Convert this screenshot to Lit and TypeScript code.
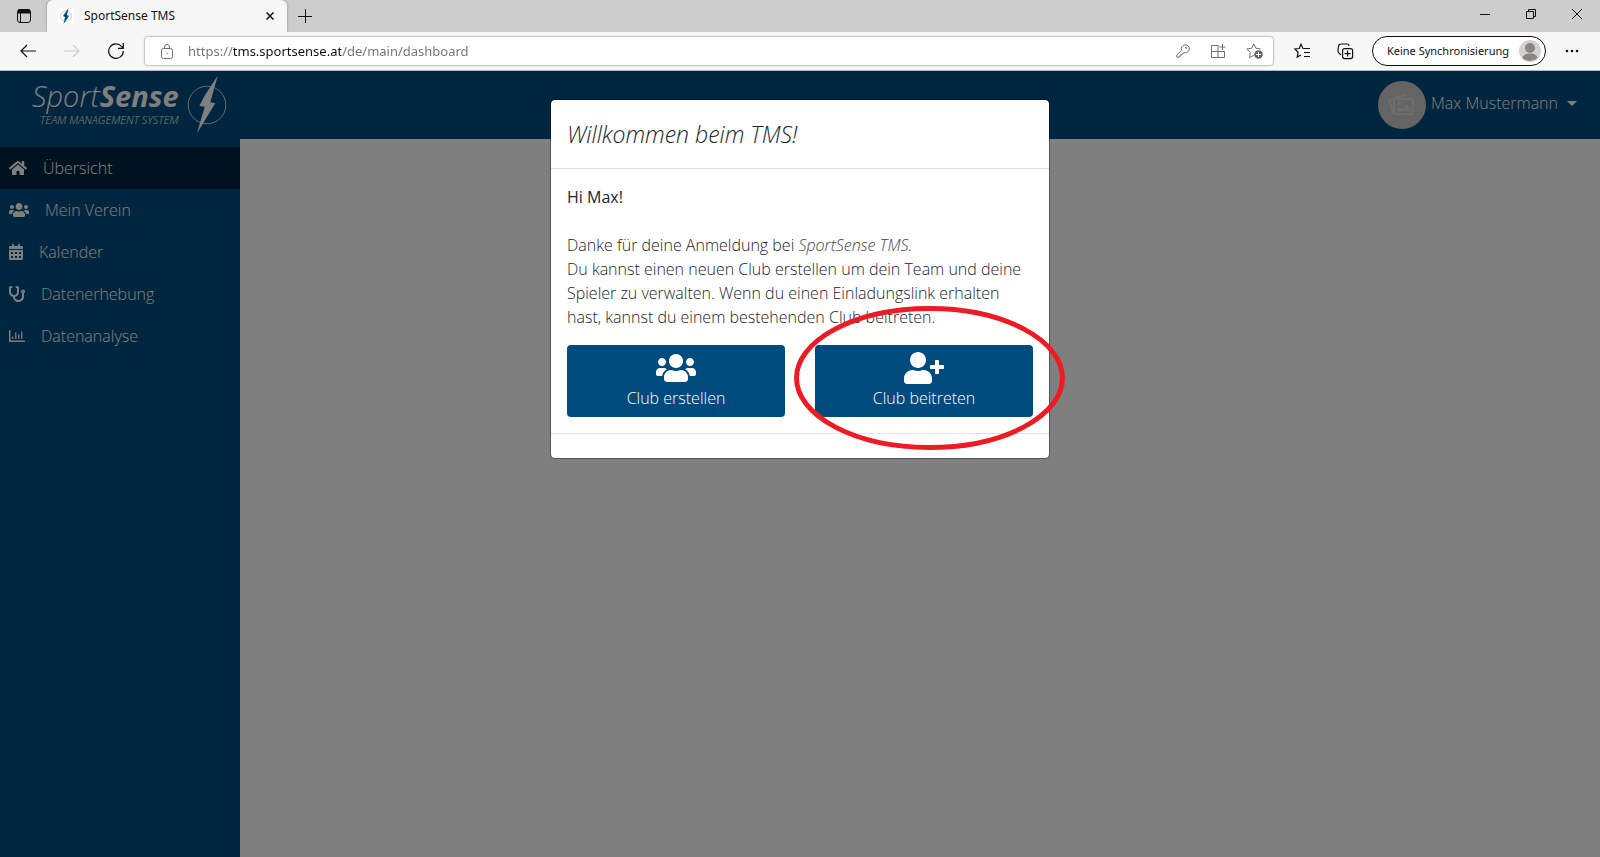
import { LitElement, html, css, svg } from "lit";
import { customElement, property } from "lit/decorators.js";

const icons: Record<string, { box: string; art: unknown }> = {
  home: {
    box: "0 0 576 512",
    art: svg`<path d="M280.37 148.26L96 300.11V464a16 16 0 0 0 16 16l112.06-.29a16 16 0 0 0 15.92-16V368a16 16 0 0 1 16-16h64a16 16 0 0 1 16 16v95.64a16 16 0 0 0 16 16.05L464 480a16 16 0 0 0 16-16V300L295.67 148.26a12.19 12.19 0 0 0-15.3 0zM571.6 251.47L488 182.56V44.05a12 12 0 0 0-12-12h-56a12 12 0 0 0-12 12v72.61L318.47 43a48 48 0 0 0-61 0L4.34 251.47a12 12 0 0 0-1.6 16.9l25.5 31A12 12 0 0 0 45.15 301l235.22-193.74a12.19 12.19 0 0 1 15.3 0L530.9 301a12 12 0 0 0 16.9-1.6l25.5-31a12 12 0 0 0-1.7-16.93z"/>`,
  },
  users: {
    box: "0 0 640 512",
    art: svg`<path d="M96 224c35.3 0 64-28.7 64-64s-28.7-64-64-64-64 28.7-64 64 28.7 64 64 64zm448 0c35.3 0 64-28.7 64-64s-28.7-64-64-64-64 28.7-64 64 28.7 64 64 64zm32 32h-64c-17.6 0-33.5 7.1-45.1 18.6 40.3 22.1 68.9 62 75.1 109.4h66c17.7 0 32-14.3 32-32v-32c0-35.3-28.7-64-64-64zm-256 0c61.9 0 112-50.1 112-112S381.9 32 320 32 208 82.1 208 144s50.1 112 112 112zm76.8 32h-8.3c-20.8 10-43.9 16-68.5 16s-47.6-6-68.5-16h-8.3C179.6 288 128 339.6 128 403.2V432c0 26.5 21.5 48 48 48h288c26.5 0 48-21.5 48-48v-28.8c0-63.6-51.6-115.2-115.2-115.2zm-223.7-13.4C161.5 263.1 145.6 256 128 256H64c-35.3 0-64 28.7-64 64v32c0 17.7 14.3 32 32 32h65.9c6.3-47.4 34.9-87.3 75.2-109.4z"/>`,
  },
  userPlus: {
    box: "0 0 640 512",
    art: svg`<path d="M624 208h-64v-64c0-8.8-7.2-16-16-16h-32c-8.8 0-16 7.2-16 16v64h-64c-8.8 0-16 7.2-16 16v32c0 8.8 7.2 16 16 16h64v64c0 8.8 7.2 16 16 16h32c8.8 0 16-7.2 16-16v-64h64c8.8 0 16-7.2 16-16v-32c0-8.8-7.2-16-16-16zm-400 48c70.7 0 128-57.3 128-128S294.7 0 224 0 96 57.3 96 128s57.3 128 128 128zm89.6 32h-16.7c-22.2 10.2-46.9 16-72.9 16s-50.6-5.8-72.9-16h-16.7C60.2 288 0 348.2 0 422.4V464c0 26.5 21.5 48 48 48h352c26.5 0 48-21.5 48-48v-41.6c0-74.2-60.2-134.4-134.4-134.4z"/>`,
  },
  calendar: {
    box: "0 0 448 512",
    art: svg`<path fill-rule="evenodd" d="M0 464c0 26.5 21.5 48 48 48h352c26.5 0 48-21.5 48-48V192H0zM64 256h64v64H64zM192 256h64v64h-64zM320 256h64v64h-64zM64 384h64v64H64zM192 384h64v64h-64zM320 384h64v64h-64zM400 64h-48V16c0-8.8-7.2-16-16-16h-32c-8.8 0-16 7.2-16 16v48H160V16c0-8.8-7.2-16-16-16h-32c-8.8 0-16 7.2-16 16v48H48C21.5 64 0 85.5 0 112v48h448v-48c0-26.5-21.5-48-48-48z"/>`,
  },
  stethoscope: {
    box: "0 0 512 512",
    art: svg`<path d="M447.1 112c-34.2.5-62.3 28.4-63 62.6-.5 24.3 12.5 45.6 32 56.8V344c0 57.3-50.2 104-112 104-60 0-109.2-44.1-111.9-99.2C265 333.8 320 269.2 320 192V36.6c0-11.4-8.1-21.3-19.3-23.5L237.8.5c-13-2.6-25.6 5.8-28.2 18.8L206.4 35c-2.6 13 5.8 25.6 18.8 28.2l30.7 6.1v121.4c0 52.9-42.2 96.7-95.1 97.2-53.4.5-96.9-42.7-96.9-96V69.4l30.7-6.1c13-2.6 21.4-15.2 18.8-28.2l-3.1-15.7C107.7 6.4 95.1-2 82.1.6L19.3 13C8.1 15.3 0 25.1 0 36.6V192c0 77.3 55.1 142 128.1 156.8C130.7 439.2 208.6 512 304 512c97 0 176-75.4 176-168V231.4c19.1-11.1 32-31.7 32-55.4 0-35.7-29.2-64.5-64.9-64zm.9 80c-8.8 0-16-7.2-16-16s7.2-16 16-16 16 7.2 16 16-7.2 16-16 16z"/>`,
  },
  chart: {
    box: "0 0 512 512",
    art: svg`<path d="M12 64h24a12 12 0 0 1 12 12v324h452a12 12 0 0 1 12 12v24a12 12 0 0 1-12 12H24a24 24 0 0 1-24-24V76a12 12 0 0 1 12-12zM100 272h40v80h-40zM196 144h40v208h-40zM292 208h40v144h-40zM388 112h40v240h-40z"/>`,
  },
};

@customElement("fa-icon")
class FaIcon extends LitElement {
  @property() name = "home";
  static styles = css`
    :host { display: inline-flex; }
    svg { display: block; height: 1em; width: auto; fill: currentColor; }
  `;
  render() {
    const i = icons[this.name];
    return html`<svg viewBox=${i.box} aria-hidden="true">${i.art}</svg>`;
  }
}

@customElement("browser-chrome")
class BrowserChrome extends LitElement {
  static styles = css`
    :host { display: block; font: 12px/16px "Noto Sans", sans-serif; color: #111; }
    button { border: 0; padding: 0; background: none; font: inherit; color: inherit; display: flex; align-items: center; justify-content: center; }
    svg { display: block; fill: none; stroke: currentColor; }
    svg.solid { stroke: none; fill: currentColor; }
    .tabs { display: flex; height: 32px; background: #cdcdcd; }
    .tabmenu { width: 47px; }
    .tab { display: flex; align-items: center; width: 240px; box-sizing: border-box; padding: 0 9px 0 11px; gap: 10px; background: #f7f7f7; border-radius: 6px 6px 0 0; box-shadow: 0 0 3px #0005; clip-path: inset(-3px -3px 0 -3px); }
    .tab h2 { flex: 1; margin: 0; font: inherit; }
    .close { width: 16px; height: 16px; }
    .new { width: 36px; }
    .window { margin-left: auto; display: flex; }
    .window button { width: 46px; height: 28px; }
    .bar { display: flex; align-items: center; height: 38px; background: #f7f7f7; border-bottom: 1px solid #b9b9b9; padding-right: 6px; }
    .nav { display: flex; padding: 0 6px; }
    .nav button { width: 44px; height: 30px; }
    .nav .off { color: #ccc; }
    .address { display: flex; align-items: center; flex: 1; height: 28px; margin-right: 6px; border: 1px solid #c9c9c9; border-radius: 4px; background: #fff; box-shadow: 0 0 2px #0002; color: #707070; }
    .lock { width: 43px; }
    input { flex: 1; min-width: 0; border: 0; padding: 0; outline: 0; font: 13px/20px "Noto Sans", sans-serif; color: transparent; background: linear-gradient(90deg, #717171 45px, #111 45px, #111 153px, #717171 153px); background-clip: text; -webkit-background-clip: text; }
    .tool { width: 36px; height: 28px; }
    .side { width: 44px; height: 28px; }
    .profile { gap: 10px; height: 30px; padding: 0 4px 0 14px; margin-left: 4px; border: 1px solid #111; border-radius: 15px; white-space: nowrap; background: #fff; font-size: 11px; }
    .more { width: 44px; height: 28px; margin-left: 4px; }
  `;
  render() {
    return html`
      <div class="tabs">
        <button class="tabmenu" aria-label="Tabaktionen"><svg width="16" height="16" viewBox="0 0 16 16"><rect x="1.5" y="1.5" width="13" height="13" rx="2.5"/><path d="M2 3.5h12" stroke-width="4"/><path d="M4.5 4v10"/></svg></button>
        <div class="tab">
          <svg class="solid" width="16" height="16" viewBox="0 0 16 16"><path d="M0 0h16v16H0z" fill="#fff"/><circle cx="8" cy="8" r="5.5" fill="none" stroke="#c5d5e0"/><path d="M10.500 0 5 8l2 1-1.500 7 5.500-8-2-1z" fill="#004b7d"/></svg>
          <h2>SportSense TMS</h2>
          <button class="close" aria-label="Tab schließen"><svg width="8" height="8" viewBox="0 0 8 8" stroke-width="1.5"><path d="m.5.5 7 7m0-7-7 7"/></svg></button>
        </div>
        <button class="new" aria-label="Neuer Tab"><svg width="14" height="14" viewBox="0 0 14 14"><path d="M0 7.500h14M7.500 0v14"/></svg></button>
        <div class="window">
          <button aria-label="Minimieren"><svg width="10" height="10" viewBox="0 0 10 10"><path d="M0 5.500h10"/></svg></button>
          <button aria-label="Verkleinern"><svg width="10" height="10" viewBox="0 0 10 10"><path d="M.5 2.500h7v7h-7zM2.500 2.500v-2h7v7h-2"/></svg></button>
          <button aria-label="Schließen"><svg width="10" height="10" viewBox="0 0 10 10"><path d="m0 0 10 10M10 0 0 10"/></svg></button>
        </div>
      </div>
      <div class="bar">
        <div class="nav">
          <button aria-label="Zurück"><svg width="16" height="14" viewBox="0 0 16 14" stroke-width="1.2"><path d="M16 7H1M7 1 1 7l6 6"/></svg></button>
          <button class="off" aria-label="Vorwärts" disabled><svg width="16" height="14" viewBox="0 0 16 14" stroke-width="1.2"><path d="M0 7h15M9 1l6 6-6 6"/></svg></button>
          <button aria-label="Aktualisieren"><svg width="16" height="16" viewBox="0 0 16 16" stroke-width="1.2"><path d="M15.300 8A7.300 7.300 0 1 1 13.500 3.300L15 5M15.300 0v5.300H10"/></svg></button>
        </div>
        <div class="address">
          <button class="lock" aria-label="Websiteinformationen"><svg width="12" height="15" viewBox="0 0 12 15"><rect x=".5" y="4.500" width="11" height="10" rx="2"/><path d="M3.500 4.500V3a2.500 2.500 0 0 1 5 0v1.500M5.500 9.500h1.200"/></svg></button>
          <input aria-label="Adresse" value="https://tms.sportsense.at/de/main/dashboard" />
          <button class="tool" aria-label="Kennwort"><svg width="14" height="14" viewBox="0 0 14 14"><path d="M5.600 6.300 .8 11v2.200h2.500V12h1.500v-1.500h1.500l1.500-2A4 4 0 1 0 5.600 6.300z"/><circle cx="10.200" cy="3.800" r=".6"/></svg></button>
          <button class="tool" aria-label="Apps"><svg width="15" height="15" viewBox="0 0 15 15"><path d="M7.500 1.500h-7v12h13v-6M.5 7.500h13M7 1.500v12M11.500 0v6M8.500 3h6"/></svg></button>
          <button class="tool" aria-label="Zu Favoriten hinzufügen"><svg width="18" height="16" viewBox="0 0 18 16"><path d="M8 12.300 3.500 14.500l.8-5.100L.8 6l4.800-.7L7.800.9 10 5.300l4.800.7"/><circle cx="12.500" cy="11.500" r="4.300" fill="#666" stroke="none"/><path d="M12.500 9v5M10 11.500h5" stroke="#fff"/></svg></button>
        </div>
        <button class="side" aria-label="Favoriten"><svg width="16" height="16" viewBox="0 0 16 16" stroke-width="1.200"><path d="M16 5.500H9L7 1.200 5.200 5.500.8 6l3.300 3.200-.9 4.900L7 12M10 9.500h6M10 13.500h6"/></svg></button>
        <button class="side" aria-label="Sammlungen"><svg width="17" height="17" viewBox="0 0 17 17" stroke-width="1.200"><path d="M4 12 1.800 9.800A3 3 0 0 1 1 7.500l.5-4A2.500 2.500 0 0 1 4 1h6a2 2 0 0 1 2 2"/><rect x="5.600" y="5.600" width="10" height="10" rx="2"/><path d="M10.600 7.600v6M7.600 10.600h6"/></svg></button>
        <button class="profile">Keine Synchronisierung<svg class="solid" width="22" height="22" viewBox="0 0 22 22"><circle cx="11" cy="11" r="11" fill="#d3d1ce"/><circle cx="11" cy="8" r="5" fill="#8a8683"/><path d="M3.500 18a7.500 4.500 0 0 1 15 0 11 11 0 0 1-15 0" fill="#8a8683"/></svg></button>
        <button class="more" aria-label="Einstellungen"><svg class="solid" width="14" height="4" viewBox="0 0 14 4"><circle cx="2" cy="2" r="1.300"/><circle cx="7" cy="2" r="1.300"/><circle cx="12" cy="2" r="1.300"/></svg></button>
      </div>
    `;
  }
}

@customElement("welcome-dialog")
class WelcomeDialog extends LitElement {
  static styles = css`
    :host { display: block; width: 500px; max-width: 100%; }
    .card { box-sizing: border-box; background: #fff; border: 1px solid #0005; border-radius: 5px; background-clip: padding-box; color: #212529; }
    header { padding: 16px; border-bottom: 1px solid #dee2e6; }
    h1 { margin: 0; font-size: 23px; line-height: 36px; font-weight: 300; font-style: italic; }
    .body { padding: 16px; }
    p { margin: 0; }
    .hi { font-weight: 400; margin-bottom: 24px; }
    em { color: #444; }
    .actions { display: grid; grid-template-columns: 1fr 1fr; gap: 30px; margin-top: 16px; }
    .choice { position: relative; display: grid; }
    button { border: 0; border-radius: 4px; padding: 7px 12px; background: #004b7d; color: #fff; font: inherit; display: flex; flex-direction: column; align-items: center; gap: 2px; }
    fa-icon { font-size: 32px; }
    .ring { position: absolute; left: -21px; top: -39px; width: 271px; height: 144px; pointer-events: none; fill: none; stroke: #ed1c24; stroke-width: 5; }
    footer { height: 24px; border-top: 1px solid #dee2e6; }
  `;
  render() {
    return html`
      <section class="card" role="dialog" aria-labelledby="title">
        <header><h1 id="title">Willkommen beim TMS!</h1></header>
        <div class="body">
          <p class="hi">Hi Max!</p>
          <p>Danke für deine Anmeldung bei <em>SportSense TMS.</em></p>
          <p>Du kannst einen neuen Club erstellen um dein Team und deine Spieler zu verwalten. Wenn du einen Einladungslink erhalten hast, kannst du einem bestehenden Club beitreten.</p>
          <div class="actions">
            <div class="choice"><button><fa-icon name="users"></fa-icon>Club erstellen</button></div>
            <div class="choice">
              <button><fa-icon name="userPlus"></fa-icon>Club beitreten</button>
              <svg class="ring" viewBox="0 0 271 144" aria-hidden="true"><ellipse cx="135.500" cy="72" rx="133" ry="69.500"/></svg>
            </div>
          </div>
        </div>
        <footer></footer>
      </section>
    `;
  }
}

const menu = [
  { icon: "home", label: "Übersicht" },
  { icon: "users", label: "Mein Verein" },
  { icon: "calendar", label: "Kalender" },
  { icon: "stethoscope", label: "Datenerhebung" },
  { icon: "chart", label: "Datenanalyse" },
];

@customElement("app-root")
class AppRoot extends LitElement {
  static styles = css`
    :host { display: flex; flex-direction: column; min-height: 100vh; font: 300 16px/24px "Open Sans", sans-serif; }
    .page { position: relative; flex: 1; display: flex; flex-direction: column; background: #fff; color: #fff; }
    .top { display: flex; align-items: center; justify-content: space-between; height: 68px; background: #004b7d; padding: 0 23px 0 32px; }
    .logo { display: flex; align-items: center; gap: 8px; color: #fff; text-decoration: none; }
    .brand { display: flex; flex-direction: column; font-style: italic; padding-bottom: 6px; }
    .name { font-size: 29px; line-height: 36px; }
    .name b { font-weight: 700; }
    .claim { font-size: 11px; line-height: 12px; padding-left: 8px; }
    .user { display: flex; align-items: center; gap: 5px; border: 0; padding: 0; background: none; font: inherit; color: #fff; }
    .who { display: flex; align-items: center; gap: 9px; padding-bottom: 4px; }
    .caret { border: 5px solid transparent; border-top-color: #fff; border-bottom: 0; }
    .main { flex: 1; display: flex; }
    nav { width: 240px; background: #004b7d; padding-top: 8px; box-sizing: border-box; }
    nav a { display: flex; align-items: center; gap: 16px; height: 42px; padding-left: 9px; color: #fff; text-decoration: none; }
    nav a.active { background: #00253e; }
    .backdrop { position: absolute; inset: 0; background: #00000080; display: flex; justify-content: center; align-items: flex-start; padding-top: 28px; }
  `;
  render() {
    return html`
      <browser-chrome></browser-chrome>
      <div class="page">
        <div class="top">
          <a class="logo" href="#">
            <span class="brand"><span class="name">Sport<b>Sense</b></span><span class="claim">TEAM MANAGEMENT SYSTEM</span></span>
            <svg width="40" height="60" viewBox="0 0 40 60"><circle cx="20" cy="30" r="18.800" fill="none" stroke="#fff" stroke-opacity=".8"/><path d="M30.700.7 18 20l-5.700 11 5.400.7L10 58.300l18.300-30-5-1z" fill="#fff"/></svg>
          </a>
          <button class="user">
            <svg width="48" height="48" viewBox="0 0 48 48"><circle cx="24" cy="24" r="24" fill="#c8c8c8"/><g fill="none" stroke="#dadada" stroke-width="2"><path d="M16 32h-1l-4-13 16-5 1 2"/><rect x="16" y="18" width="19" height="15"/></g><path d="m18 30 4-4 3 2 4-5 4 7z" fill="#dadada"/><circle cx="21" cy="22" r="2" fill="#dadada"/></svg>
            <span class="who">Max Mustermann<span class="caret"></span></span>
          </button>
        </div>
        <div class="main">
          <nav>${menu.map((m, i) => html`<a href="#" class=${i === 0 ? "active" : ""}><fa-icon name=${m.icon}></fa-icon>${m.label}</a>`)}</nav>
          <main></main>
        </div>
        <div class="backdrop"><welcome-dialog></welcome-dialog></div>
      </div>
    `;
  }
}
